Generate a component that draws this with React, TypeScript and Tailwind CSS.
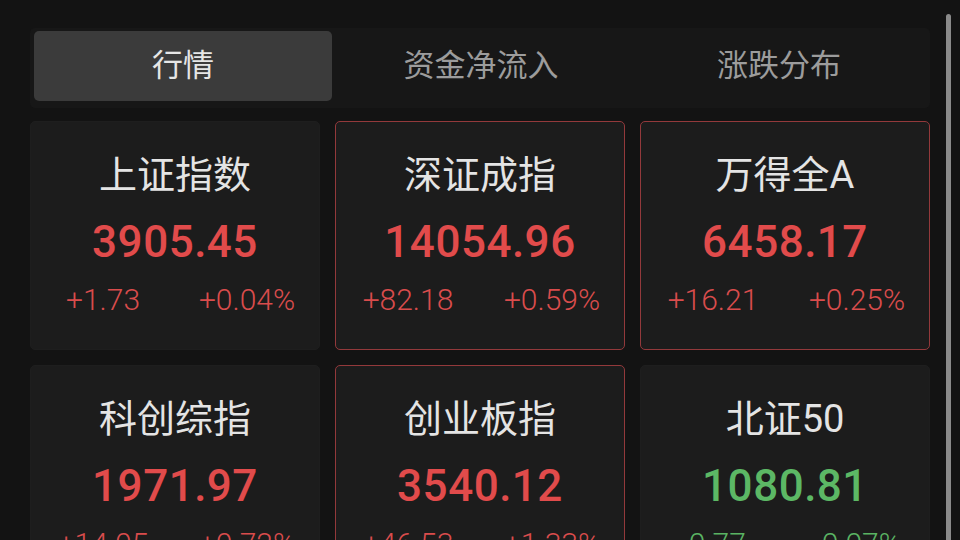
import React from 'react'

type Quote = {
  name: string
  price: string
  change: string
  pct: string
  up: boolean
  hot?: boolean
}

const quotes: Quote[] = [
  { name: '上证指数', price: '3905.45', change: '+1.73', pct: '+0.04%', up: true },
  { name: '深证成指', price: '14054.96', change: '+82.18', pct: '+0.59%', up: true, hot: true },
  { name: '万得全A', price: '6458.17', change: '+16.21', pct: '+0.25%', up: true, hot: true },
  { name: '科创综指', price: '1971.97', change: '+14.05', pct: '+0.72%', up: true },
  { name: '创业板指', price: '3540.12', change: '+46.53', pct: '+1.33%', up: true, hot: true },
  { name: '北证50', price: '1080.81', change: '-0.77', pct: '-0.07%', up: false },
]

const tabs = ['行情', '资金净流入', '涨跌分布']

function QuoteCard({ q }: { q: Quote }) {
  const tone = q.up ? 'text-[#e14b4b]' : 'text-[#5cb865]'
  const soft = q.up ? 'text-[#d94c4c]' : 'text-[#5ab363]'
  return (
    <div
      className={`h-[229px] rounded-[5px] bg-[#1c1c1c] border flex flex-col items-center pt-[31px] ${
        q.hot ? 'border-[#93393b]' : 'border-[#1e1e1e]'
      }`}
    >
      <div className="text-[38px] leading-[44px] text-[#e4e4e4]">{q.name}</div>
      <div className={`mt-[19px] text-[44px] leading-[52px] font-medium tracking-[0.5px] ${tone}`}>
        {q.price}
      </div>
      <div className={`mt-[14px] w-full grid grid-cols-2 text-[30px] leading-[36px] font-light ${soft}`}>
        <span className="text-center">{q.change}</span>
        <span className="text-center">{q.pct}</span>
      </div>
    </div>
  )
}

export default function App() {
  return (
    <div
      className="relative w-[960px] h-[540px] overflow-hidden bg-[#131313]"
      style={{ fontFamily: 'Roboto, "Noto Sans CJK SC", sans-serif' }}
    >
      <div className="px-[30px] pt-[28px]">
        {/* Tabs */}
        <div className="flex bg-[#171717] rounded-[5px] pl-[4px] pr-[2px] pt-[3px] pb-[7px]">
          {tabs.map((t, i) => (
            <div
              key={t}
              className={`flex-1 h-[70px] flex items-center justify-center rounded-[5px] text-[31px] ${
                i === 0 ? 'bg-[#3b3b3b] text-[#e6e6e6]' : 'text-[#9c9c9c]'
              }`}
            >
              {t}
            </div>
          ))}
        </div>

        {/* Index cards */}
        <div className="mt-[13px] grid grid-cols-3 gap-[15px]">
          {quotes.map((q) => (
            <QuoteCard key={q.name} q={q} />
          ))}
        </div>
      </div>

      {/* scrollbar */}
      <div className="absolute left-[946px] top-[14px] w-[5px] h-[540px] rounded-t-full bg-[#8a8a8a]" />
    </div>
  )
}
